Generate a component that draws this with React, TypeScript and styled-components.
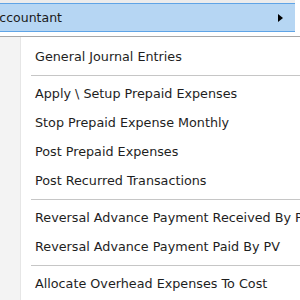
import React from "react";
import styled, { createGlobalStyle } from "styled-components";

const GlobalStyle = createGlobalStyle`
  html, body {
    margin: 0;
    padding: 0;
    background: #ffffff;
    overflow: hidden;
  }
  body {
    font-family: "DejaVu Sans", sans-serif;
  }
`;

const Screen = styled.div`
  width: 300px;
  height: 300px;
  overflow: hidden;
  background: #ffffff;
  display: flex;
  flex-direction: column;
`;

const ParentMenu = styled.div`
  width: 295px;
  padding-top: 3px;
  padding-bottom: 4px;
  background: linear-gradient(#ececec 0, #ececec 3px, #ffffff 3px);
`;

const ParentItem = styled.div`
  height: 27px;
  display: flex;
  align-items: center;
  justify-content: space-between;
  background: #b6d6f3;
  border-top: 1px solid #5fa4e6;
  border-bottom: 1px solid #5fa4e6;
  margin-left: -9px;
  padding-right: 12px;
  font-size: 12.5px;
  color: #1a1a1a;
`;

const Arrow = styled.span`
  width: 0;
  height: 0;
  border-top: 4px solid transparent;
  border-bottom: 4px solid transparent;
  border-left: 5px solid #000000;
`;

const SubMenu = styled.div`
  flex: 1;
  display: flex;
  border-top: 1px solid #a7a7a7;
`;

const Gutter = styled.div`
  width: 20px;
  background: #f3f3f3;
  border-right: 1px solid #e6e6e6;
  box-shadow: 1px 0 0 #ffffff;
`;

const Items = styled.div`
  flex: 1;
  padding-top: 5px;
  padding-left: 10px;
  display: flex;
  flex-direction: column;
  min-width: 0;
`;

const Item = styled.div`
  height: 29px;
  display: flex;
  align-items: center;
  padding-left: 4px;
  font-size: 12.75px;
  color: #1e1e1e;
  white-space: nowrap;
`;

const Separator = styled.div`
  height: 8px;
  display: flex;
  align-items: center;
  &::before {
    content: "";
    flex: 1;
    height: 1px;
    background: #c6c6c6;
    box-shadow: 0 1px 0 #ffffff;
  }
`;

type Entry = { label: string } | { sep: true };

const entries: Entry[] = [
  { label: "General Journal Entries" },
  { sep: true },
  { label: "Apply \\ Setup Prepaid Expenses" },
  { label: "Stop Prepaid Expense Monthly" },
  { label: "Post Prepaid Expenses" },
  { label: "Post Recurred Transactions" },
  { sep: true },
  { label: "Reversal Advance Payment Received By PV" },
  { label: "Reversal Advance Payment Paid By PV" },
  { sep: true },
  { label: "Allocate Overhead Expenses To Cost" },
];

export default function App() {
  return (
    <Screen>
      <GlobalStyle />
      <ParentMenu>
        <ParentItem>
          <span>Accountant</span>
          <Arrow />
        </ParentItem>
      </ParentMenu>
      <SubMenu>
        <Gutter />
        <Items>
          {entries.map((e, i) =>
            "sep" in e ? <Separator key={i} /> : <Item key={i}>{e.label}</Item>
          )}
        </Items>
      </SubMenu>
    </Screen>
  );
}
